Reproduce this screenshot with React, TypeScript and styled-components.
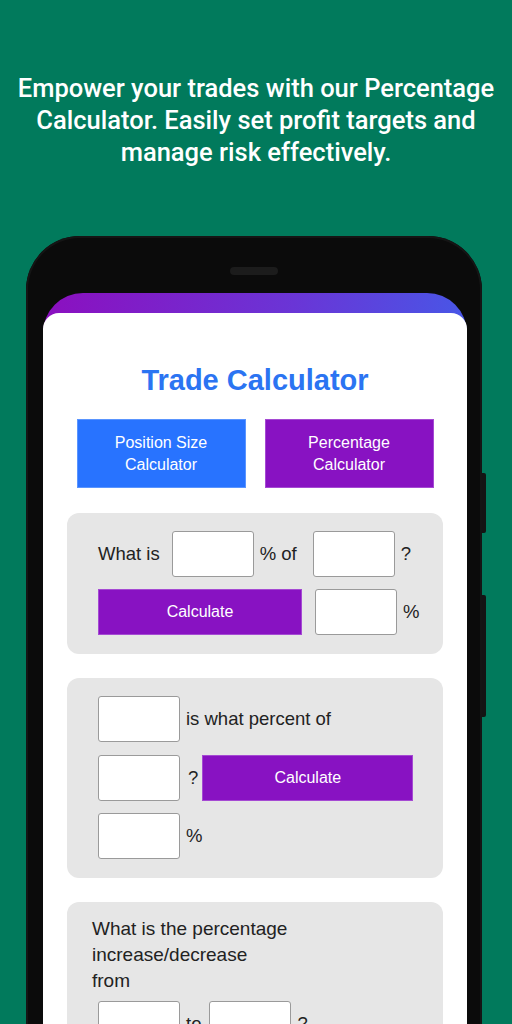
import styled, {createGlobalStyle} from 'styled-components';

const GlobalStyle = createGlobalStyle`
    html, body {
        margin: 0;
        padding: 0;
        background: #017a5c;
    }
    * {
        box-sizing: border-box;
    }
`;

const APP_FONT = `"Liberation Sans", Arial, Helvetica, sans-serif`;

const Page = styled.div`
    width: 512px;
    height: 1024px;
    overflow: hidden;
    background: #017a5c;
    display: flex;
    flex-direction: column;
    align-items: center;
`;

const Headline = styled.h1`
    margin: 72px 0 0;
    padding: 0 6px;
    font-family: Roboto, "Noto Sans", sans-serif;
    font-weight: 500;
    font-size: 25.5px;
    line-height: 32px;
    color: #ffffff;
    text-align: center;
`;

const Phone = styled.div`
    position: relative;
    align-self: flex-start;
    margin: 68px 0 0 26px;
    width: 456px;
    flex: 1;
    background: #0b0b0b;
    border-radius: 54px 54px 0 0;
    box-shadow: inset 0 0 0 2px #151515;
    padding: 31px 15px 0 17px;
    display: flex;
    flex-direction: column;
`;

const SideKey = styled.div<{$top: number; $height: number}>`
    position: absolute;
    left: 100%;
    top: ${p => p.$top}px;
    width: 4px;
    height: ${p => p.$height}px;
    background: #141414;
    border-radius: 0 2px 2px 0;
`;

const Speaker = styled.div`
    align-self: center;
    width: 48px;
    height: 8px;
    margin-right: 2px;
    border-radius: 4px;
    background: #1c1c1c;
`;

const Screen = styled.div`
    margin-top: 18px;
    flex: 1;
    border-radius: 40px 40px 0 0;
    background: linear-gradient(100deg, #8c0fbf 0%, #6a35d6 45%, #2e70f3 100%);
    padding-top: 20px;
    display: flex;
    flex-direction: column;
`;

const Panel = styled.div`
    flex: 1;
    background: #ffffff;
    border-radius: 16px 16px 0 0;
    padding: 50px 24px 0;
    font-family: ${APP_FONT};
    color: #222222;
`;

const Title = styled.h2`
    margin: 0;
    text-align: center;
    font-size: 29px;
    line-height: 34px;
    font-weight: 700;
    color: #2b74f2;
`;

const ModeRow = styled.div`
    display: flex;
    justify-content: center;
    gap: 19px;
    margin: 22px 0 25px;
`;

const ModeButton = styled.button<{$tone: 'blue' | 'purple'}>`
    width: 169px;
    height: 69px;
    border: 1px solid ${p => (p.$tone === 'blue' ? '#5a95ff' : '#a54ad3')};
    background: ${p => (p.$tone === 'blue' ? '#2873ff' : '#8812c2')};
    color: #ffffff;
    font-family: ${APP_FONT};
    font-size: 16px;
    line-height: 22px;
    padding: 0 20px;
`;

const Card = styled.div<{$gap?: number}>`
    background: #e6e6e6;
    border-radius: 12px;
    padding: 18px 20px 19px 31px;
    display: flex;
    flex-direction: column;
    gap: ${p => p.$gap ?? 12}px;
    & + & {
        margin-top: 24px;
    }
`;

const Row = styled.div`
    display: flex;
    align-items: center;
    height: 46px;
`;

const Label = styled.span<{$left?: number; $right?: number}>`
    font-size: 18.5px;
    line-height: 22px;
    color: #222222;
    margin-left: ${p => p.$left ?? 6}px;
    margin-right: ${p => p.$right ?? 0}px;
    white-space: nowrap;
`;

const Field = styled.input<{$left?: number}>`
    width: 82px;
    height: 46px;
    margin-left: ${p => p.$left ?? 0}px;
    border: 1px solid #9a9a9a;
    border-radius: 3px;
    background: #ffffff;
    padding: 0 6px;
    font-size: 18px;
    font-family: ${APP_FONT};
    outline: none;
`;

const CalcButton = styled.button<{$width: number; $left?: number}>`
    width: ${p => p.$width}px;
    height: 46px;
    margin-left: ${p => p.$left ?? 0}px;
    background: #8812c2;
    border: 1px solid #a54ad3;
    color: #ffffff;
    font-family: ${APP_FONT};
    font-size: 16px;
`;

const Question = styled.p`
    margin: -4px 0 -5px -6px;
    font-size: 19px;
    line-height: 26px;
    color: #222222;
`;

export default function App() {
    return (
        <Page>
            <GlobalStyle />
            <Headline>
                Empower your trades with our Percentage Calculator. Easily set profit targets and manage risk
                effectively.
            </Headline>
            <Phone>
                <SideKey $top={237} $height={60} />
                <SideKey $top={359} $height={122} />
                <Speaker />
                <Screen>
                    <Panel>
                        <Title>Trade Calculator</Title>
                        <ModeRow>
                            <ModeButton $tone="blue">Position Size Calculator</ModeButton>
                            <ModeButton $tone="purple">Percentage Calculator</ModeButton>
                        </ModeRow>

                        <Card>
                            <Row>
                                <Label $left={0} $right={12}>What is</Label>
                                <Field />
                                <Label>% of</Label>
                                <Field $left={16} />
                                <Label>?</Label>
                            </Row>
                            <Row>
                                <CalcButton $width={204}>Calculate</CalcButton>
                                <Field $left={13} />
                                <Label $left={6}>%</Label>
                            </Row>
                        </Card>

                        <Card $gap={12.5}>
                            <Row>
                                <Field />
                                <Label>is what percent of</Label>
                            </Row>
                            <Row>
                                <Field />
                                <Label $left={8}>?</Label>
                                <CalcButton $width={211} $left={4}>Calculate</CalcButton>
                            </Row>
                            <Row>
                                <Field />
                                <Label>%</Label>
                            </Row>
                        </Card>

                        <Card>
                            <Question>
                                What is the percentage
                                <br />
                                increase/decrease
                                <br />
                                from
                            </Question>
                            <Row>
                                <Field />
                                <Label>to</Label>
                                <Field $left={8} />
                                <Label>?</Label>
                            </Row>
                        </Card>
                    </Panel>
                </Screen>
            </Phone>
        </Page>
    );
}
